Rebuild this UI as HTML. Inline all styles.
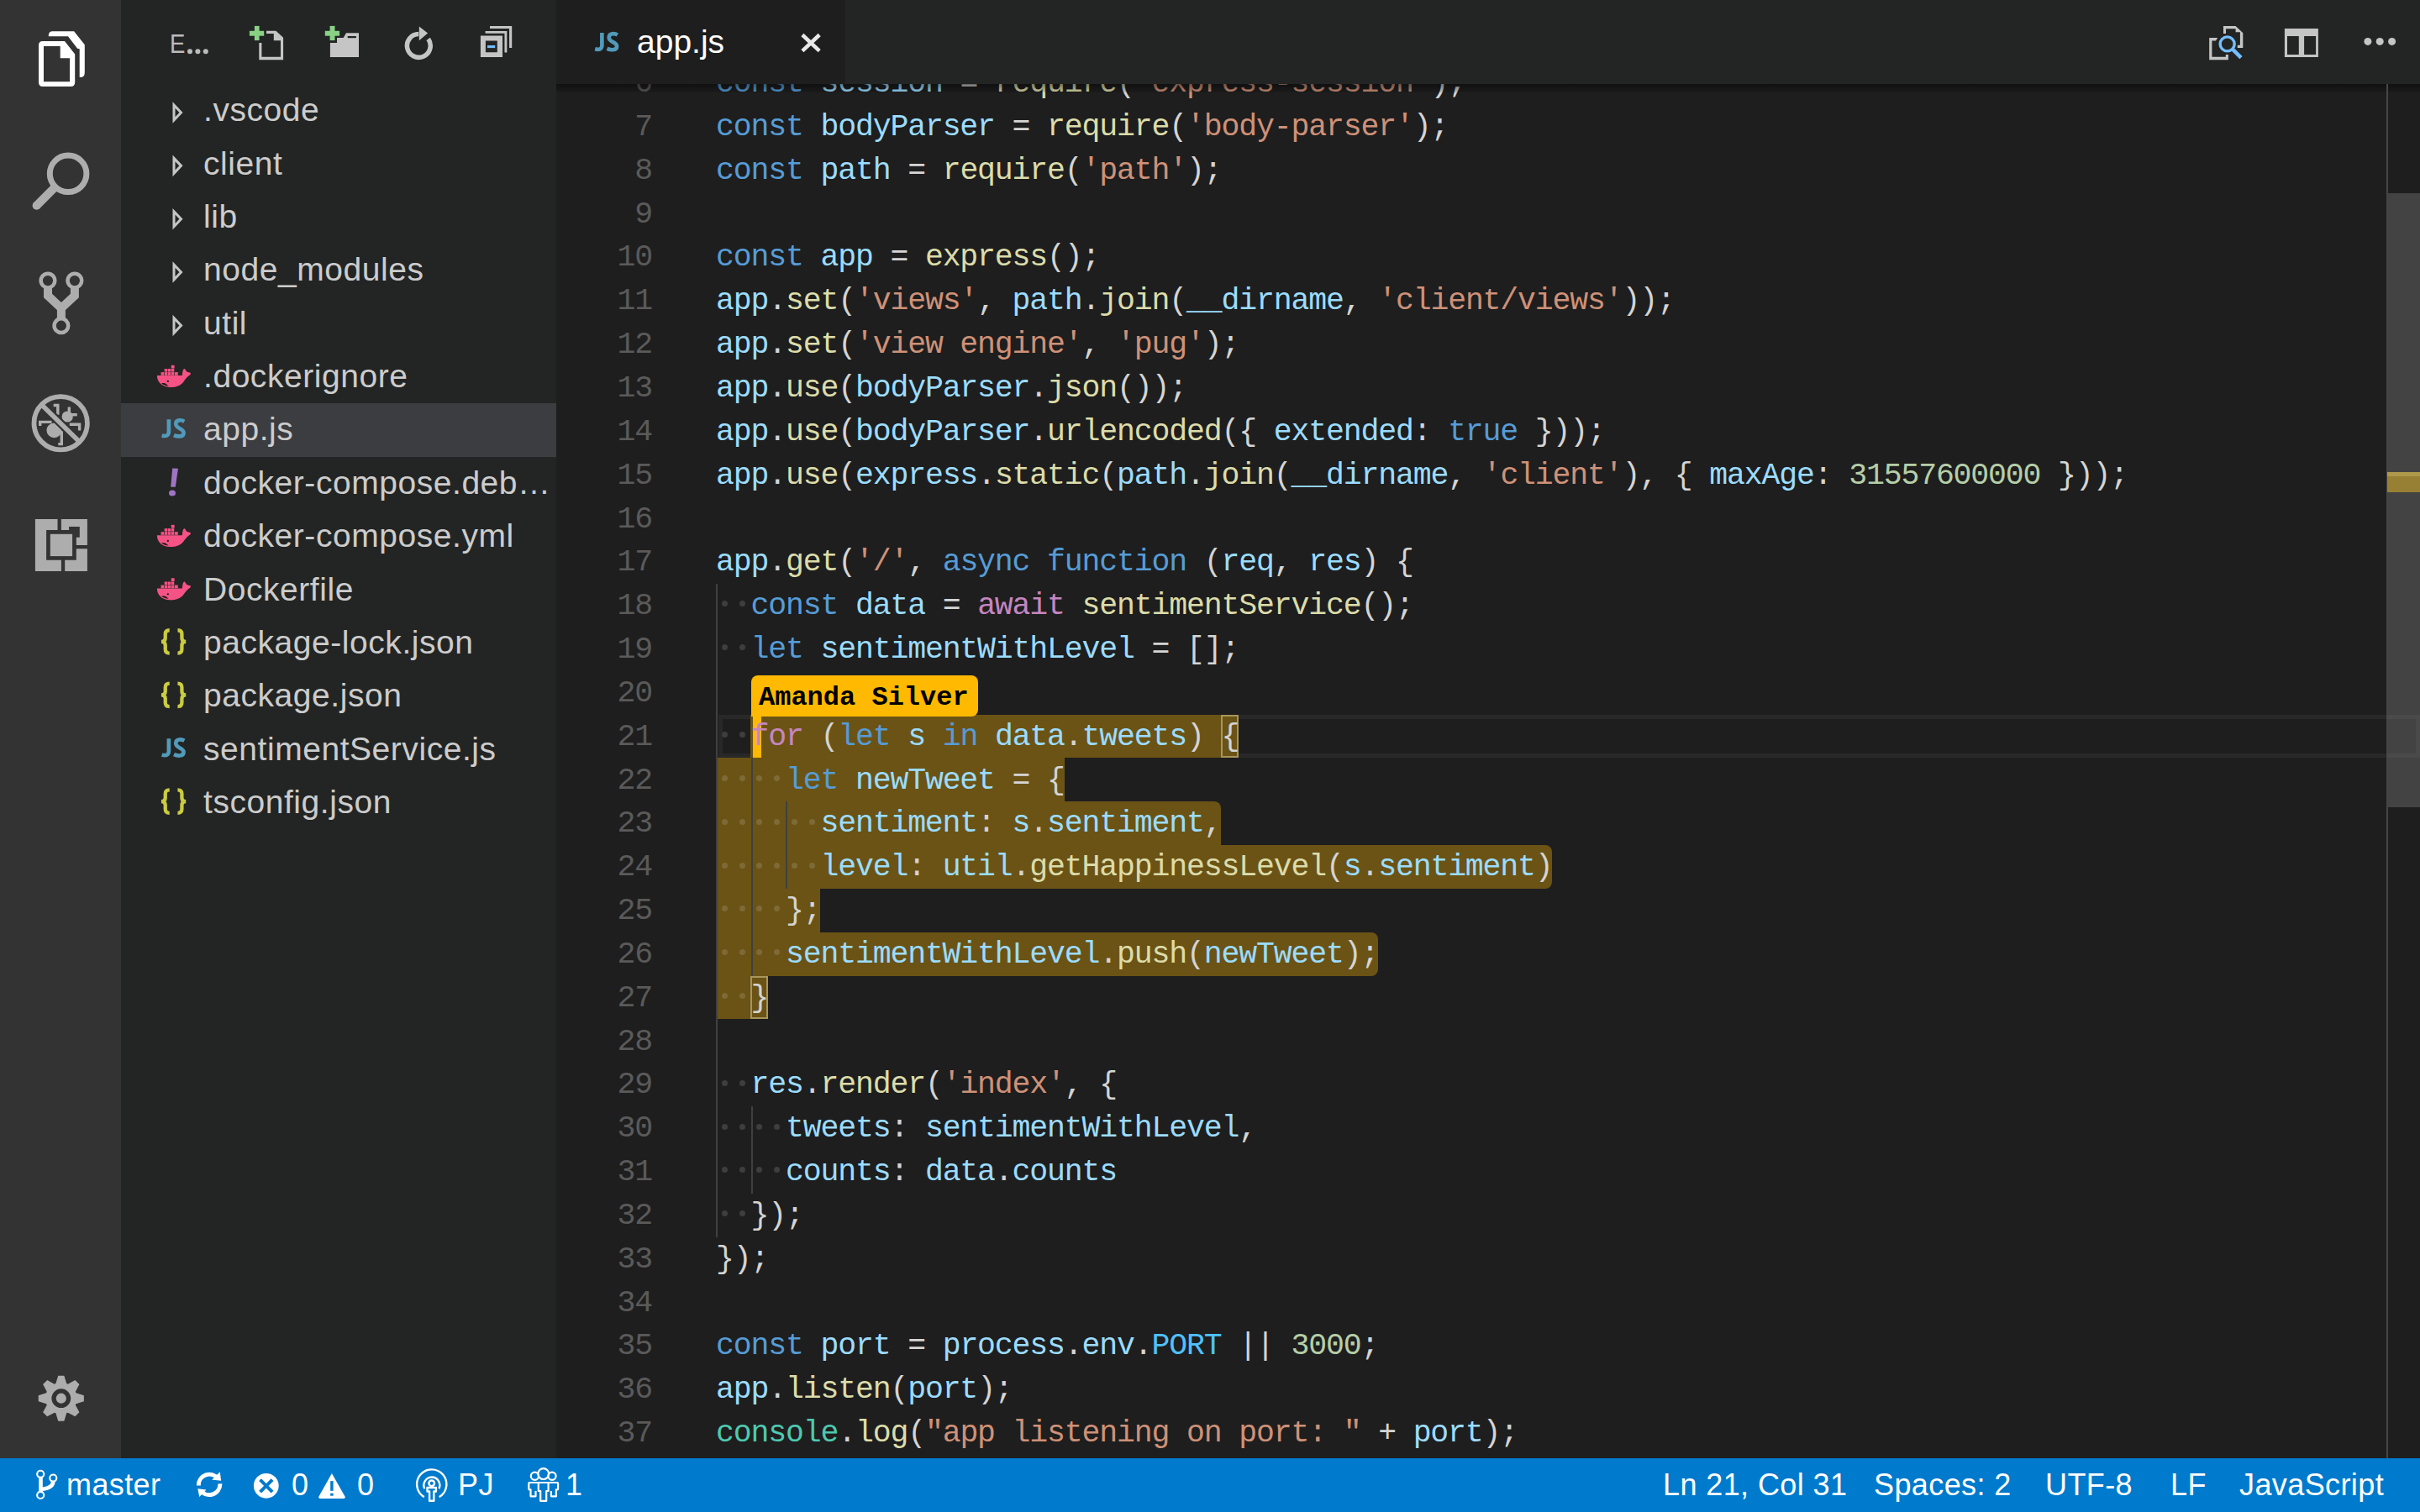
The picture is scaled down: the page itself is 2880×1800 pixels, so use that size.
<!DOCTYPE html>
<html><head><meta charset="utf-8"><title>app.js</title>
<style>
html,body{margin:0;padding:0;width:2880px;height:1800px;overflow:hidden;background:#1e1e1e;}
*{box-sizing:border-box;}
.abs{position:absolute;}
#act{position:absolute;left:0;top:0;width:144px;height:1736px;background:#333333;}
#side{position:absolute;left:144px;top:0;width:518px;height:1736px;background:#232524;}
#tabs{position:absolute;left:662px;top:0;width:2218px;height:100px;background:#232524;}
#tab{position:absolute;left:662px;top:0;width:344px;height:100px;background:#1e1e1e;}
#editor{position:absolute;left:662px;top:100px;width:2218px;height:1636px;background:#1e1e1e;overflow:hidden;}
#status{position:absolute;left:0;top:1736px;width:2880px;height:64px;background:#007acc;}
.st{position:absolute;top:0;height:64px;line-height:64px;font-family:"Liberation Sans",sans-serif;font-size:36px;letter-spacing:0.4px;color:#ffffff;white-space:pre;}
.row{position:absolute;left:144px;width:518px;height:63.36px;overflow:hidden;}
.fn{position:absolute;left:98px;font-family:"Liberation Sans",sans-serif;font-size:39px;letter-spacing:0.55px;color:#cccccc;white-space:pre;line-height:63.36px;top:-1.5px;}
.ln{position:absolute;width:150px;text-align:right;font-family:"Liberation Mono",monospace;font-size:36.5px;letter-spacing:-1.164px;color:#5a5a5a;white-space:pre;line-height:51.84px;}
.cl{position:absolute;left:852px;font-family:"Liberation Mono",monospace;font-size:36.5px;letter-spacing:-1.164px;white-space:pre;line-height:51.84px;}
</style></head><body>
<div id="act"></div>
<div id="side"></div>
<div id="tabs"></div>
<div id="tab"></div>
<div id="editor"></div>

<div class="row" style="top:100.80px;"><div class="fn">.vscode</div></div>
<div class="row" style="top:164.16px;"><div class="fn">client</div></div>
<div class="row" style="top:227.52px;"><div class="fn">lib</div></div>
<div class="row" style="top:290.88px;"><div class="fn">node_modules</div></div>
<div class="row" style="top:354.24px;"><div class="fn">util</div></div>
<div class="row" style="top:417.60px;"><div class="fn">.dockerignore</div></div>
<div class="abs" style="left:144px;top:480px;width:518px;height:64px;background:#3c3d40;"></div>
<div class="row" style="top:480.96px;"><div class="fn">app.js</div></div>
<div class="row" style="top:544.32px;"><div class="fn">docker-compose.deb…</div></div>
<div class="row" style="top:607.68px;"><div class="fn">docker-compose.yml</div></div>
<div class="row" style="top:671.04px;"><div class="fn">Dockerfile</div></div>
<div class="row" style="top:734.40px;"><div class="fn">package-lock.json</div></div>
<div class="row" style="top:797.76px;"><div class="fn">package.json</div></div>
<div class="row" style="top:861.12px;"><div class="fn">sentimentService.js</div></div>
<div class="row" style="top:924.48px;"><div class="fn">tsconfig.json</div></div>
<div style="position:absolute;left:0;top:100px;width:2880px;height:1636px;overflow:hidden;">
<div style="position:absolute;left:0;top:-100px;width:2880px;height:1800px;">
<div class="abs" style="left:855px;top:850.50px;width:1986px;height:51.84px;border:5px solid #282828;border-right:none;"></div>
<div class="abs" style="left:893.47px;top:850.50px;width:580.61px;height:51.84px;background:#6b5315;border-radius:0 8px 8px 0px;"></div>
<div class="abs" style="left:852.00px;top:902.34px;width:414.72px;height:51.84px;background:#6b5315;border-radius:0 0px 0px 0px;"></div>
<div class="abs" style="left:852.00px;top:954.18px;width:601.34px;height:51.84px;background:#6b5315;border-radius:0 8px 0px 0px;"></div>
<div class="abs" style="left:852.00px;top:1006.02px;width:995.33px;height:51.84px;background:#6b5315;border-radius:0 8px 8px 0px;"></div>
<div class="abs" style="left:852.00px;top:1057.86px;width:124.42px;height:51.84px;background:#6b5315;border-radius:0 0px 0px 0px;"></div>
<div class="abs" style="left:852.00px;top:1109.70px;width:787.97px;height:51.84px;background:#6b5315;border-radius:0 8px 8px 0px;"></div>
<div class="abs" style="left:852.00px;top:1161.54px;width:62.21px;height:51.84px;background:#6b5315;border-radius:0 0px 8px 0px;"></div>
<div class="abs" style="left:852.00px;top:694.98px;width:2px;height:777.60px;background:#404040;"></div>
<div class="abs" style="left:894.00px;top:902.34px;width:2px;height:259.20px;background:#404040;"></div>
<div class="abs" style="left:935.00px;top:954.18px;width:2px;height:103.68px;background:#404040;"></div>
<div class="abs" style="left:894.00px;top:1317.06px;width:2px;height:103.68px;background:#404040;"></div>
<div class="abs" style="left:858.87px;top:715.48px;width:7px;height:7px;border-radius:50%;background:#3e3e3e;"></div>
<div class="abs" style="left:879.60px;top:715.48px;width:7px;height:7px;border-radius:50%;background:#3e3e3e;"></div>
<div class="abs" style="left:858.87px;top:767.32px;width:7px;height:7px;border-radius:50%;background:#3e3e3e;"></div>
<div class="abs" style="left:879.60px;top:767.32px;width:7px;height:7px;border-radius:50%;background:#3e3e3e;"></div>
<div class="abs" style="left:858.87px;top:871.00px;width:7px;height:7px;border-radius:50%;background:#3e3e3e;"></div>
<div class="abs" style="left:879.60px;top:871.00px;width:7px;height:7px;border-radius:50%;background:#3e3e3e;"></div>
<div class="abs" style="left:858.87px;top:922.84px;width:7px;height:7px;border-radius:50%;background:#7e6a36;"></div>
<div class="abs" style="left:879.60px;top:922.84px;width:7px;height:7px;border-radius:50%;background:#7e6a36;"></div>
<div class="abs" style="left:900.34px;top:922.84px;width:7px;height:7px;border-radius:50%;background:#7e6a36;"></div>
<div class="abs" style="left:921.08px;top:922.84px;width:7px;height:7px;border-radius:50%;background:#7e6a36;"></div>
<div class="abs" style="left:858.87px;top:974.68px;width:7px;height:7px;border-radius:50%;background:#7e6a36;"></div>
<div class="abs" style="left:879.60px;top:974.68px;width:7px;height:7px;border-radius:50%;background:#7e6a36;"></div>
<div class="abs" style="left:900.34px;top:974.68px;width:7px;height:7px;border-radius:50%;background:#7e6a36;"></div>
<div class="abs" style="left:921.08px;top:974.68px;width:7px;height:7px;border-radius:50%;background:#7e6a36;"></div>
<div class="abs" style="left:941.81px;top:974.68px;width:7px;height:7px;border-radius:50%;background:#7e6a36;"></div>
<div class="abs" style="left:962.55px;top:974.68px;width:7px;height:7px;border-radius:50%;background:#7e6a36;"></div>
<div class="abs" style="left:858.87px;top:1026.52px;width:7px;height:7px;border-radius:50%;background:#7e6a36;"></div>
<div class="abs" style="left:879.60px;top:1026.52px;width:7px;height:7px;border-radius:50%;background:#7e6a36;"></div>
<div class="abs" style="left:900.34px;top:1026.52px;width:7px;height:7px;border-radius:50%;background:#7e6a36;"></div>
<div class="abs" style="left:921.08px;top:1026.52px;width:7px;height:7px;border-radius:50%;background:#7e6a36;"></div>
<div class="abs" style="left:941.81px;top:1026.52px;width:7px;height:7px;border-radius:50%;background:#7e6a36;"></div>
<div class="abs" style="left:962.55px;top:1026.52px;width:7px;height:7px;border-radius:50%;background:#7e6a36;"></div>
<div class="abs" style="left:858.87px;top:1078.36px;width:7px;height:7px;border-radius:50%;background:#7e6a36;"></div>
<div class="abs" style="left:879.60px;top:1078.36px;width:7px;height:7px;border-radius:50%;background:#7e6a36;"></div>
<div class="abs" style="left:900.34px;top:1078.36px;width:7px;height:7px;border-radius:50%;background:#7e6a36;"></div>
<div class="abs" style="left:921.08px;top:1078.36px;width:7px;height:7px;border-radius:50%;background:#7e6a36;"></div>
<div class="abs" style="left:858.87px;top:1130.20px;width:7px;height:7px;border-radius:50%;background:#7e6a36;"></div>
<div class="abs" style="left:879.60px;top:1130.20px;width:7px;height:7px;border-radius:50%;background:#7e6a36;"></div>
<div class="abs" style="left:900.34px;top:1130.20px;width:7px;height:7px;border-radius:50%;background:#7e6a36;"></div>
<div class="abs" style="left:921.08px;top:1130.20px;width:7px;height:7px;border-radius:50%;background:#7e6a36;"></div>
<div class="abs" style="left:858.87px;top:1182.04px;width:7px;height:7px;border-radius:50%;background:#7e6a36;"></div>
<div class="abs" style="left:879.60px;top:1182.04px;width:7px;height:7px;border-radius:50%;background:#7e6a36;"></div>
<div class="abs" style="left:858.87px;top:1285.72px;width:7px;height:7px;border-radius:50%;background:#3e3e3e;"></div>
<div class="abs" style="left:879.60px;top:1285.72px;width:7px;height:7px;border-radius:50%;background:#3e3e3e;"></div>
<div class="abs" style="left:858.87px;top:1337.56px;width:7px;height:7px;border-radius:50%;background:#3e3e3e;"></div>
<div class="abs" style="left:879.60px;top:1337.56px;width:7px;height:7px;border-radius:50%;background:#3e3e3e;"></div>
<div class="abs" style="left:900.34px;top:1337.56px;width:7px;height:7px;border-radius:50%;background:#3e3e3e;"></div>
<div class="abs" style="left:921.08px;top:1337.56px;width:7px;height:7px;border-radius:50%;background:#3e3e3e;"></div>
<div class="abs" style="left:858.87px;top:1389.40px;width:7px;height:7px;border-radius:50%;background:#3e3e3e;"></div>
<div class="abs" style="left:879.60px;top:1389.40px;width:7px;height:7px;border-radius:50%;background:#3e3e3e;"></div>
<div class="abs" style="left:900.34px;top:1389.40px;width:7px;height:7px;border-radius:50%;background:#3e3e3e;"></div>
<div class="abs" style="left:921.08px;top:1389.40px;width:7px;height:7px;border-radius:50%;background:#3e3e3e;"></div>
<div class="abs" style="left:858.87px;top:1441.24px;width:7px;height:7px;border-radius:50%;background:#3e3e3e;"></div>
<div class="abs" style="left:879.60px;top:1441.24px;width:7px;height:7px;border-radius:50%;background:#3e3e3e;"></div>
<div class="abs" style="left:1453.34px;top:850.50px;width:20.74px;height:51.84px;border:2px solid #a8955a;"></div>
<div class="abs" style="left:893.47px;top:1161.54px;width:20.74px;height:51.84px;border:2px solid #a8955a;"></div>
<div class="abs" style="left:896px;top:850.50px;width:10px;height:51.84px;background:#ffb900;"></div>
<div class="ln" style="left:626px;top:74.10px;">6</div>
<div class="cl" style="top:74.10px;"><span style="color:#569cd6">const</span><span style="color:#d4d4d4"> </span><span style="color:#9cdcfe">session</span><span style="color:#d4d4d4"> = </span><span style="color:#dcdcaa">require</span><span style="color:#d4d4d4">(</span><span style="color:#ce9178">&#x27;express-session&#x27;</span><span style="color:#d4d4d4">);</span></div>
<div class="ln" style="left:626px;top:125.94px;">7</div>
<div class="cl" style="top:125.94px;"><span style="color:#569cd6">const</span><span style="color:#d4d4d4"> </span><span style="color:#9cdcfe">bodyParser</span><span style="color:#d4d4d4"> = </span><span style="color:#dcdcaa">require</span><span style="color:#d4d4d4">(</span><span style="color:#ce9178">&#x27;body-parser&#x27;</span><span style="color:#d4d4d4">);</span></div>
<div class="ln" style="left:626px;top:177.78px;">8</div>
<div class="cl" style="top:177.78px;"><span style="color:#569cd6">const</span><span style="color:#d4d4d4"> </span><span style="color:#9cdcfe">path</span><span style="color:#d4d4d4"> = </span><span style="color:#dcdcaa">require</span><span style="color:#d4d4d4">(</span><span style="color:#ce9178">&#x27;path&#x27;</span><span style="color:#d4d4d4">);</span></div>
<div class="ln" style="left:626px;top:229.62px;">9</div>
<div class="ln" style="left:626px;top:281.46px;">10</div>
<div class="cl" style="top:281.46px;"><span style="color:#569cd6">const</span><span style="color:#d4d4d4"> </span><span style="color:#9cdcfe">app</span><span style="color:#d4d4d4"> = </span><span style="color:#dcdcaa">express</span><span style="color:#d4d4d4">();</span></div>
<div class="ln" style="left:626px;top:333.30px;">11</div>
<div class="cl" style="top:333.30px;"><span style="color:#9cdcfe">app</span><span style="color:#d4d4d4">.</span><span style="color:#dcdcaa">set</span><span style="color:#d4d4d4">(</span><span style="color:#ce9178">&#x27;views&#x27;</span><span style="color:#d4d4d4">, </span><span style="color:#9cdcfe">path</span><span style="color:#d4d4d4">.</span><span style="color:#dcdcaa">join</span><span style="color:#d4d4d4">(</span><span style="color:#9cdcfe">__dirname</span><span style="color:#d4d4d4">, </span><span style="color:#ce9178">&#x27;client/views&#x27;</span><span style="color:#d4d4d4">));</span></div>
<div class="ln" style="left:626px;top:385.14px;">12</div>
<div class="cl" style="top:385.14px;"><span style="color:#9cdcfe">app</span><span style="color:#d4d4d4">.</span><span style="color:#dcdcaa">set</span><span style="color:#d4d4d4">(</span><span style="color:#ce9178">&#x27;view engine&#x27;</span><span style="color:#d4d4d4">, </span><span style="color:#ce9178">&#x27;pug&#x27;</span><span style="color:#d4d4d4">);</span></div>
<div class="ln" style="left:626px;top:436.98px;">13</div>
<div class="cl" style="top:436.98px;"><span style="color:#9cdcfe">app</span><span style="color:#d4d4d4">.</span><span style="color:#dcdcaa">use</span><span style="color:#d4d4d4">(</span><span style="color:#9cdcfe">bodyParser</span><span style="color:#d4d4d4">.</span><span style="color:#dcdcaa">json</span><span style="color:#d4d4d4">());</span></div>
<div class="ln" style="left:626px;top:488.82px;">14</div>
<div class="cl" style="top:488.82px;"><span style="color:#9cdcfe">app</span><span style="color:#d4d4d4">.</span><span style="color:#dcdcaa">use</span><span style="color:#d4d4d4">(</span><span style="color:#9cdcfe">bodyParser</span><span style="color:#d4d4d4">.</span><span style="color:#dcdcaa">urlencoded</span><span style="color:#d4d4d4">({ </span><span style="color:#9cdcfe">extended</span><span style="color:#d4d4d4">: </span><span style="color:#569cd6">true</span><span style="color:#d4d4d4"> }));</span></div>
<div class="ln" style="left:626px;top:540.66px;">15</div>
<div class="cl" style="top:540.66px;"><span style="color:#9cdcfe">app</span><span style="color:#d4d4d4">.</span><span style="color:#dcdcaa">use</span><span style="color:#d4d4d4">(</span><span style="color:#9cdcfe">express</span><span style="color:#d4d4d4">.</span><span style="color:#dcdcaa">static</span><span style="color:#d4d4d4">(</span><span style="color:#9cdcfe">path</span><span style="color:#d4d4d4">.</span><span style="color:#dcdcaa">join</span><span style="color:#d4d4d4">(</span><span style="color:#9cdcfe">__dirname</span><span style="color:#d4d4d4">, </span><span style="color:#ce9178">&#x27;client&#x27;</span><span style="color:#d4d4d4">), { </span><span style="color:#9cdcfe">maxAge</span><span style="color:#d4d4d4">: </span><span style="color:#b5cea8">31557600000</span><span style="color:#d4d4d4"> }));</span></div>
<div class="ln" style="left:626px;top:592.50px;">16</div>
<div class="ln" style="left:626px;top:644.34px;">17</div>
<div class="cl" style="top:644.34px;"><span style="color:#9cdcfe">app</span><span style="color:#d4d4d4">.</span><span style="color:#dcdcaa">get</span><span style="color:#d4d4d4">(</span><span style="color:#ce9178">&#x27;/&#x27;</span><span style="color:#d4d4d4">, </span><span style="color:#569cd6">async</span><span style="color:#d4d4d4"> </span><span style="color:#569cd6">function</span><span style="color:#d4d4d4"> (</span><span style="color:#9cdcfe">req</span><span style="color:#d4d4d4">, </span><span style="color:#9cdcfe">res</span><span style="color:#d4d4d4">) {</span></div>
<div class="ln" style="left:626px;top:696.18px;">18</div>
<div class="cl" style="top:696.18px;"><span style="color:#d4d4d4">  </span><span style="color:#569cd6">const</span><span style="color:#d4d4d4"> </span><span style="color:#9cdcfe">data</span><span style="color:#d4d4d4"> = </span><span style="color:#c586c0">await</span><span style="color:#d4d4d4"> </span><span style="color:#dcdcaa">sentimentService</span><span style="color:#d4d4d4">();</span></div>
<div class="ln" style="left:626px;top:748.02px;">19</div>
<div class="cl" style="top:748.02px;"><span style="color:#d4d4d4">  </span><span style="color:#569cd6">let</span><span style="color:#d4d4d4"> </span><span style="color:#9cdcfe">sentimentWithLevel</span><span style="color:#d4d4d4"> = [];</span></div>
<div class="ln" style="left:626px;top:799.86px;">20</div>
<div class="ln" style="left:626px;top:851.70px;">21</div>
<div class="cl" style="top:851.70px;"><span style="color:#d4d4d4">  </span><span style="color:#c586c0">for</span><span style="color:#d4d4d4"> (</span><span style="color:#569cd6">let</span><span style="color:#d4d4d4"> </span><span style="color:#9cdcfe">s</span><span style="color:#d4d4d4"> </span><span style="color:#569cd6">in</span><span style="color:#d4d4d4"> </span><span style="color:#9cdcfe">data</span><span style="color:#d4d4d4">.</span><span style="color:#9cdcfe">tweets</span><span style="color:#d4d4d4">) {</span></div>
<div class="ln" style="left:626px;top:903.54px;">22</div>
<div class="cl" style="top:903.54px;"><span style="color:#d4d4d4">    </span><span style="color:#569cd6">let</span><span style="color:#d4d4d4"> </span><span style="color:#9cdcfe">newTweet</span><span style="color:#d4d4d4"> = {</span></div>
<div class="ln" style="left:626px;top:955.38px;">23</div>
<div class="cl" style="top:955.38px;"><span style="color:#d4d4d4">      </span><span style="color:#9cdcfe">sentiment</span><span style="color:#d4d4d4">: </span><span style="color:#9cdcfe">s</span><span style="color:#d4d4d4">.</span><span style="color:#9cdcfe">sentiment</span><span style="color:#d4d4d4">,</span></div>
<div class="ln" style="left:626px;top:1007.22px;">24</div>
<div class="cl" style="top:1007.22px;"><span style="color:#d4d4d4">      </span><span style="color:#9cdcfe">level</span><span style="color:#d4d4d4">: </span><span style="color:#9cdcfe">util</span><span style="color:#d4d4d4">.</span><span style="color:#dcdcaa">getHappinessLevel</span><span style="color:#d4d4d4">(</span><span style="color:#9cdcfe">s</span><span style="color:#d4d4d4">.</span><span style="color:#9cdcfe">sentiment</span><span style="color:#d4d4d4">)</span></div>
<div class="ln" style="left:626px;top:1059.06px;">25</div>
<div class="cl" style="top:1059.06px;"><span style="color:#d4d4d4">    };</span></div>
<div class="ln" style="left:626px;top:1110.90px;">26</div>
<div class="cl" style="top:1110.90px;"><span style="color:#d4d4d4">    </span><span style="color:#9cdcfe">sentimentWithLevel</span><span style="color:#d4d4d4">.</span><span style="color:#dcdcaa">push</span><span style="color:#d4d4d4">(</span><span style="color:#9cdcfe">newTweet</span><span style="color:#d4d4d4">);</span></div>
<div class="ln" style="left:626px;top:1162.74px;">27</div>
<div class="cl" style="top:1162.74px;"><span style="color:#d4d4d4">  }</span></div>
<div class="ln" style="left:626px;top:1214.58px;">28</div>
<div class="ln" style="left:626px;top:1266.42px;">29</div>
<div class="cl" style="top:1266.42px;"><span style="color:#d4d4d4">  </span><span style="color:#9cdcfe">res</span><span style="color:#d4d4d4">.</span><span style="color:#dcdcaa">render</span><span style="color:#d4d4d4">(</span><span style="color:#ce9178">&#x27;index&#x27;</span><span style="color:#d4d4d4">, {</span></div>
<div class="ln" style="left:626px;top:1318.26px;">30</div>
<div class="cl" style="top:1318.26px;"><span style="color:#d4d4d4">    </span><span style="color:#9cdcfe">tweets</span><span style="color:#d4d4d4">: </span><span style="color:#9cdcfe">sentimentWithLevel</span><span style="color:#d4d4d4">,</span></div>
<div class="ln" style="left:626px;top:1370.10px;">31</div>
<div class="cl" style="top:1370.10px;"><span style="color:#d4d4d4">    </span><span style="color:#9cdcfe">counts</span><span style="color:#d4d4d4">: </span><span style="color:#9cdcfe">data</span><span style="color:#d4d4d4">.</span><span style="color:#9cdcfe">counts</span></div>
<div class="ln" style="left:626px;top:1421.94px;">32</div>
<div class="cl" style="top:1421.94px;"><span style="color:#d4d4d4">  });</span></div>
<div class="ln" style="left:626px;top:1473.78px;">33</div>
<div class="cl" style="top:1473.78px;"><span style="color:#d4d4d4">});</span></div>
<div class="ln" style="left:626px;top:1525.62px;">34</div>
<div class="ln" style="left:626px;top:1577.46px;">35</div>
<div class="cl" style="top:1577.46px;"><span style="color:#569cd6">const</span><span style="color:#d4d4d4"> </span><span style="color:#9cdcfe">port</span><span style="color:#d4d4d4"> = </span><span style="color:#9cdcfe">process</span><span style="color:#d4d4d4">.</span><span style="color:#9cdcfe">env</span><span style="color:#d4d4d4">.</span><span style="color:#4fc1ff">PORT</span><span style="color:#d4d4d4"> || </span><span style="color:#b5cea8">3000</span><span style="color:#d4d4d4">;</span></div>
<div class="ln" style="left:626px;top:1629.30px;">36</div>
<div class="cl" style="top:1629.30px;"><span style="color:#9cdcfe">app</span><span style="color:#d4d4d4">.</span><span style="color:#dcdcaa">listen</span><span style="color:#d4d4d4">(</span><span style="color:#9cdcfe">port</span><span style="color:#d4d4d4">);</span></div>
<div class="ln" style="left:626px;top:1681.14px;">37</div>
<div class="cl" style="top:1681.14px;"><span style="color:#4ec9b0">console</span><span style="color:#d4d4d4">.</span><span style="color:#dcdcaa">log</span><span style="color:#d4d4d4">(</span><span style="color:#ce9178">&quot;app listening on port: &quot;</span><span style="color:#d4d4d4"> + </span><span style="color:#9cdcfe">port</span><span style="color:#d4d4d4">);</span></div>
<div class="ln" style="left:626px;top:1732.98px;">38</div>
<div class="abs" style="left:894px;top:804px;width:270px;height:49px;background:#ffb900;border-radius:8px 8px 8px 0;"></div>
<div class="abs" style="left:903px;top:807px;height:47px;line-height:47px;font-family:'Liberation Mono',monospace;font-weight:bold;font-size:32px;color:#000;white-space:pre;">Amanda Silver</div>
</div></div>
<div class="abs" style="left:662px;top:100px;width:2218px;height:10px;background:linear-gradient(rgba(0,0,0,0.45),rgba(0,0,0,0.1));"></div>
<div class="abs" style="left:2840px;top:100px;width:1.5px;height:1636px;background:#474747;"></div>
<div class="abs" style="left:2841px;top:230px;width:39px;height:731px;background:#434343;"></div>
<div class="abs" style="left:2841px;top:562px;width:39px;height:24px;background:#977f33;border-top:5px solid #ae9849;"></div>
<div class="abs" style="left:2841px;top:850.50px;width:39px;height:51.84px;border:5px solid rgba(255,255,255,0.04);border-left:none;"></div>
<div class="abs" style="left:758px;top:0;height:100px;line-height:100px;font-family:'Liberation Sans',sans-serif;font-size:39px;color:#ffffff;white-space:pre;">app.js</div>
<div class="abs" style="left:202px;top:0;height:100px;line-height:104px;font-family:'Liberation Sans',sans-serif;font-size:32px;color:#bbbbbb;white-space:pre;transform:scaleX(0.86);transform-origin:0 0;">E</div>
<svg class="abs" style="left:0;top:0" width="260" height="100"><g fill="#bbbbbb"><circle cx="226" cy="61.3" r="3"/><circle cx="235.4" cy="61.3" r="3"/><circle cx="244.8" cy="61.3" r="3"/></g></svg>
<div id="status"></div>
<div class="st" style="left:79px;top:1736px;">master</div>
<div class="st" style="left:347px;top:1736px;">0</div>
<div class="st" style="left:425px;top:1736px;">0</div>
<div class="st" style="left:545px;top:1736px;">PJ</div>
<div class="st" style="left:673px;top:1736px;">1</div>
<div class="st" style="left:1979px;top:1736px;">Ln 21, Col 31</div>
<div class="st" style="left:2230px;top:1736px;">Spaces: 2</div>
<div class="st" style="left:2434px;top:1736px;">UTF-8</div>
<div class="st" style="left:2583px;top:1736px;">LF</div>
<div class="st" style="left:2665px;top:1736px;">JavaScript</div>
<svg class="abs" style="left:0;top:0;" width="2880" height="1800" viewBox="0 0 2880 1800">
<g fill="#ffffff" fill-rule="evenodd">
<path d="M46 54 Q46 49 51 49 L77 49 L89.2 64.4 L89.2 98 Q89.2 103 84.2 103 L51 103 Q46 103 46 98 Z M52 55 L71.7 55 L71.7 69.2 L83.1 69.2 L83.1 97.3 L52 97.3 Z"/>
<path d="M62 37.2 L88.1 37.2 L100.8 53.3 L100.8 86.5 Q100.8 92 95.5 92 L94.7 92 L94.7 58.3 L92.1 57.8 L81 43.2 L57.7 43.2 Q57.7 37.2 62 37.2 Z"/>
</g>
<g fill="none" stroke="#adadad">
<circle cx="81.1" cy="206.8" r="21.8" stroke-width="7"/>
<circle cx="43.6" cy="244.8" r="5" fill="#adadad" stroke="none"/>
<line x1="67" y1="221.3" x2="43.6" y2="244.8" stroke-width="10" stroke-linecap="butt"/>
</g>
<g fill="none" stroke="#adadad">
<circle cx="57" cy="334.1" r="8.35" stroke-width="4.5"/>
<circle cx="88.9" cy="334.1" r="8.35" stroke-width="4.5"/>
<circle cx="72.9" cy="387.7" r="8.35" stroke-width="4.5"/>
<path d="M57 342 L57 352 L72.9 367 L88.9 352 L88.9 342 M72.9 367 L72.9 380" stroke-width="10"/>
</g>
<g fill="#adadad">
<circle cx="64.4" cy="512.3" r="8.9"/>
<circle cx="80.2" cy="496" r="6.6"/>
</g>
<g fill="none" stroke="#adadad" stroke-width="3.4">
<path d="M47.7 507 L47.7 502.4 L61.5 502.4"/>
<path d="M73.3 512.8 L73.3 528.6 L69.3 528.6"/>
<path d="M68.8 493.7 L68.8 482.5 L63.7 482.5"/>
<path d="M82.3 490.6 L82.3 484.5"/>
<path d="M82 493.7 L91.8 493.7"/>
<path d="M82.8 505.3 L94.6 505.3 L94.6 512.6"/>
</g>
<line x1="48" y1="480.3" x2="95.6" y2="527.1" stroke="#333333" stroke-width="10"/>
<circle cx="72.2" cy="503.7" r="31.7" fill="none" stroke="#adadad" stroke-width="5.75"/>
<line x1="50" y1="482.3" x2="93.6" y2="525.1" stroke="#adadad" stroke-width="5.6"/>
<g fill="#adadad">
<path d="M41.9 617.9 L68.5 617.9 L68.5 631.1 L55.1 631.1 L55.1 666.8 L72.9 666.8 L72.9 679.9 L41.9 679.9 Z"/>
<path d="M72.9 617.9 L103.9 617.9 L103.9 648.9 L90.8 648.9 L90.8 639.8 L94.8 639.8 L94.8 627.1 L82.1 627.1 L82.1 631.1 L72.9 631.1 Z"/>
<path d="M90.8 653.2 L103.9 653.2 L103.9 679.9 L77.2 679.9 L77.2 666.8 L90.8 666.8 Z"/>
<rect x="59.8" y="635.8" width="26.3" height="26.3"/>
</g>
<path fill="#adadad" fill-rule="evenodd" d="M66.37 1647.03 L69.24 1637.63 L76.36 1637.63 L79.23 1647.03 L80.75 1647.66 L89.42 1643.04 L94.46 1648.08 L89.84 1656.75 L90.47 1658.27 L99.87 1661.14 L99.87 1668.26 L90.47 1671.13 L89.84 1672.65 L94.46 1681.32 L89.42 1686.36 L80.75 1681.74 L79.23 1682.37 L76.36 1691.77 L69.24 1691.77 L66.37 1682.37 L64.85 1681.74 L56.18 1686.36 L51.14 1681.32 L55.76 1672.65 L55.13 1671.13 L45.73 1668.26 L45.73 1661.14 L55.13 1658.27 L55.76 1656.75 L51.14 1648.08 L56.18 1643.04 L64.85 1647.66 Z M84.20 1664.70 A11.4 11.4 0 1 0 61.40 1664.70 A11.4 11.4 0 1 0 84.20 1664.70 Z"/><circle cx="72.8" cy="1664.7" r="6.1" fill="#adadad"/>
<g fill="#89d185">
<rect x="302.9" y="30.9" width="5.7" height="17.2"/><rect x="296.9" y="36.8" width="17.3" height="5.9"/>
<rect x="392.6" y="30.9" width="5.9" height="17.2"/><rect x="386.8" y="36.8" width="17.3" height="5.9"/>
</g>
<g fill="#c5c5c5">
<path d="M317 36.8 L328.4 36.8 L337.1 44.8 L337.1 71.2 L308.3 71.2 L308.3 51 L311.4 51 L311.4 67.8 L334 67.8 L334 48.2 L325.8 48.2 L325.8 39.9 L317 39.9 Z"/>
<path d="M392.9 68.1 L392.9 51 L401 51 L401 45.1 L408.7 45.1 L412 39.3 L427 39.3 L427 68.1 Z"/>
</g>
<rect x="413.7" y="43" width="10.2" height="2.2" fill="#232524"/>
<path d="M498.3 40.5 A13.9 13.9 0 1 0 509.7 46.4" fill="none" stroke="#c5c5c5" stroke-width="5.5"/>
<path d="M498.8 31.5 L509.1 39.6 L498.8 48.2 Z" fill="#c5c5c5"/>
<g fill="#c5c5c5" fill-rule="evenodd">
<path d="M571.9 42.4 L598 42.4 L598 68.1 L571.9 68.1 Z M577.9 48.4 L577.9 62.2 L591.8 62.2 L591.8 48.4 Z"/>
<path d="M577.6 36.9 L603.3 36.9 L603.3 62.5 L600.5 62.5 L600.5 39.8 L577.6 39.8 Z"/>
<path d="M583 31 L609.2 31 L609.2 57.1 L606.1 57.1 L606.1 34 L583 34 Z"/>
</g>
<rect x="580" y="54" width="9.2" height="3.1" fill="#75beff"/>
<path d="M954.9 41.5 L975.2 60.7 M975.2 41.5 L954.9 60.7" stroke="#e8e8e8" stroke-width="4.5"/>
<g fill="#c5c5c5">
<path d="M2646 31 L2660.6 31 L2669.3 39.3 L2669.3 56.9 L2662.8 56.9 L2662.8 53.8 L2665.9 53.8 L2665.9 38.3 L2660.6 38.3 L2660.6 34.3 L2649 34.3 L2649 39.9 L2646 39.9 Z"/>
<path d="M2629.2 45.1 L2639.2 45.1 L2637 48.6 L2632.4 48.6 L2632.4 67.8 L2648.8 67.8 L2648.8 65 L2651.9 65 L2651.9 71.2 L2629.2 71.2 Z"/>
<path fill-rule="evenodd" d="M2718.9 34 L2758.9 34 L2758.9 68.1 L2718.9 68.1 Z M2722 43 L2722 65 L2735.8 65 L2735.8 43 Z M2742.1 43 L2742.1 65 L2756.1 65 L2756.1 43 Z"/>
<circle cx="2817.9" cy="49.4" r="4.5"/><circle cx="2832.2" cy="49.4" r="4.5"/><circle cx="2846.6" cy="49.4" r="4.5"/>
</g>
<circle cx="2650.65" cy="52.4" r="8.5" fill="none" stroke="#75beff" stroke-width="3.4"/>
<line x1="2656.7" y1="58.4" x2="2667" y2="68.7" stroke="#75beff" stroke-width="4.5"/>
<path d="M207 125.00 L215.5 134.00 L207 143.00 Z" fill="none" stroke="#c5c5c5" stroke-width="3" stroke-linejoin="miter"/>
<path d="M207 188.36 L215.5 197.36 L207 206.36 Z" fill="none" stroke="#c5c5c5" stroke-width="3" stroke-linejoin="miter"/>
<path d="M207 251.72 L215.5 260.72 L207 269.72 Z" fill="none" stroke="#c5c5c5" stroke-width="3" stroke-linejoin="miter"/>
<path d="M207 315.08 L215.5 324.08 L207 333.08 Z" fill="none" stroke="#c5c5c5" stroke-width="3" stroke-linejoin="miter"/>
<path d="M207 378.44 L215.5 387.44 L207 396.44 Z" fill="none" stroke="#c5c5c5" stroke-width="3" stroke-linejoin="miter"/>
<g transform="translate(182 428.00) scale(0.025138)" fill="#f55385">
<rect x="380" y="600" width="140" height="145"/><rect x="545" y="600" width="140" height="145"/><rect x="705" y="600" width="140" height="145"/><rect x="865" y="600" width="140" height="145"/><rect x="1030" y="600" width="155" height="145"/>
<rect x="545" y="440" width="140" height="140"/><rect x="705" y="440" width="140" height="140"/><rect x="865" y="440" width="140" height="140"/>
<rect x="865" y="270" width="155" height="150"/>
<path d="M195 760 L1380 760 C1400 700 1390 560 1440 480 C1460 440 1500 430 1520 460 L1600 580 L1790 640 L1770 720 C1650 800 1550 900 1450 1050 C1300 1250 1050 1320 800 1310 C400 1300 195 1050 195 760 Z"/>
<circle cx="710" cy="1030" r="45" fill="#1a1a1a"/>
<path d="M400 1130 C500 1110 580 1110 620 1150 L740 1250 C600 1240 500 1200 400 1130 Z" fill="#1a1a1a"/>
</g>
<g transform="translate(182 618.08) scale(0.025138)" fill="#f55385">
<rect x="380" y="600" width="140" height="145"/><rect x="545" y="600" width="140" height="145"/><rect x="705" y="600" width="140" height="145"/><rect x="865" y="600" width="140" height="145"/><rect x="1030" y="600" width="155" height="145"/>
<rect x="545" y="440" width="140" height="140"/><rect x="705" y="440" width="140" height="140"/><rect x="865" y="440" width="140" height="140"/>
<rect x="865" y="270" width="155" height="150"/>
<path d="M195 760 L1380 760 C1400 700 1390 560 1440 480 C1460 440 1500 430 1520 460 L1600 580 L1790 640 L1770 720 C1650 800 1550 900 1450 1050 C1300 1250 1050 1320 800 1310 C400 1300 195 1050 195 760 Z"/>
<circle cx="710" cy="1030" r="45" fill="#1a1a1a"/>
<path d="M400 1130 C500 1110 580 1110 620 1150 L740 1250 C600 1240 500 1200 400 1130 Z" fill="#1a1a1a"/>
</g>
<g transform="translate(182 681.44) scale(0.025138)" fill="#f55385">
<rect x="380" y="600" width="140" height="145"/><rect x="545" y="600" width="140" height="145"/><rect x="705" y="600" width="140" height="145"/><rect x="865" y="600" width="140" height="145"/><rect x="1030" y="600" width="155" height="145"/>
<rect x="545" y="440" width="140" height="140"/><rect x="705" y="440" width="140" height="140"/><rect x="865" y="440" width="140" height="140"/>
<rect x="865" y="270" width="155" height="150"/>
<path d="M195 760 L1380 760 C1400 700 1390 560 1440 480 C1460 440 1500 430 1520 460 L1600 580 L1790 640 L1770 720 C1650 800 1550 900 1450 1050 C1300 1250 1050 1320 800 1310 C400 1300 195 1050 195 760 Z"/>
<circle cx="710" cy="1030" r="45" fill="#1a1a1a"/>
<path d="M400 1130 C500 1110 580 1110 620 1150 L740 1250 C600 1240 500 1200 400 1130 Z" fill="#1a1a1a"/>
</g>
<g transform="translate(185.00 490.00) scale(0.026455)" fill="none" stroke="#519aba" stroke-width="175">
<path d="M600 345 L600 900 C600 1080 480 1130 290 1075"/>
<path d="M1300 440 C1180 370 915 340 915 560 C915 770 1270 760 1270 950 C1270 1170 960 1120 830 1060"/>
</g>
<g transform="translate(185.00 870.16) scale(0.026455)" fill="none" stroke="#519aba" stroke-width="175">
<path d="M600 345 L600 900 C600 1080 480 1130 290 1075"/>
<path d="M1300 440 C1180 370 915 340 915 560 C915 770 1270 760 1270 950 C1270 1170 960 1120 830 1060"/>
</g>
<g transform="translate(700.50 29.90) scale(0.026455)" fill="none" stroke="#519aba" stroke-width="175">
<path d="M600 345 L600 900 C600 1080 480 1130 290 1075"/>
<path d="M1300 440 C1180 370 915 340 915 560 C915 770 1270 760 1270 950 C1270 1170 960 1120 830 1060"/>
</g>
<path d="M205.2 557.4 L211.95 557.8 L208.8 579.8 L203.2 579.8 Z" fill="#a074c4"/><ellipse cx="205" cy="587" rx="4" ry="3.5" fill="#a074c4"/>
<g transform="translate(185 740.00) scale(0.033069)" fill="none" stroke="#cbcb41" stroke-width="130">
<path d="M505 310 C390 310 355 360 355 450 L355 600 C355 680 310 718 215 725 C310 732 355 770 355 850 L355 1000 C355 1090 390 1140 505 1140"/>
<path d="M800 310 C915 310 950 360 950 450 L950 600 C950 680 995 718 1090 725 C995 732 950 770 950 850 L950 1000 C950 1090 915 1140 800 1140"/>
</g>
<g transform="translate(185 803.36) scale(0.033069)" fill="none" stroke="#cbcb41" stroke-width="130">
<path d="M505 310 C390 310 355 360 355 450 L355 600 C355 680 310 718 215 725 C310 732 355 770 355 850 L355 1000 C355 1090 390 1140 505 1140"/>
<path d="M800 310 C915 310 950 360 950 450 L950 600 C950 680 995 718 1090 725 C995 732 950 770 950 850 L950 1000 C950 1090 915 1140 800 1140"/>
</g>
<g transform="translate(185 930.08) scale(0.033069)" fill="none" stroke="#cbcb41" stroke-width="130">
<path d="M505 310 C390 310 355 360 355 450 L355 600 C355 680 310 718 215 725 C310 732 355 770 355 850 L355 1000 C355 1090 390 1140 505 1140"/>
<path d="M800 310 C915 310 950 360 950 450 L950 600 C950 680 995 718 1090 725 C995 732 950 770 950 850 L950 1000 C950 1090 915 1140 800 1140"/>
</g>
<g fill="none" stroke="#ffffff">
<circle cx="48.2" cy="1754.8" r="4.05" stroke-width="2.1"/>
<circle cx="63.3" cy="1759.6" r="4.05" stroke-width="2.1"/>
<circle cx="48.2" cy="1779.9" r="4.05" stroke-width="2.1"/>
<path d="M48.5 1758.6 L48.5 1775.8" stroke-width="4.6"/>
<path d="M63.3 1763 C63.3 1769 59 1771.5 50 1773" stroke-width="4.7"/>
</g>
<g fill="none" stroke="#ffffff" stroke-width="5">
<path d="M236.35 1768.5 A12.8 12.8 0 0 1 259.5 1760.5"/>
<path d="M261.85 1766.3 A12.8 12.8 0 0 1 238.7 1774.3"/>
</g>
<g fill="#ffffff">
<path d="M261.8 1752.3 L263.1 1762.7 L252.2 1761.7 Z"/>
<path d="M235.3 1772.2 L237.3 1782.1 L245.5 1773.4 Z"/>
<circle cx="316.8" cy="1768.8" r="14.9"/>
<path d="M394.9 1753.9 L410.8 1782 Q411 1784 409 1784 L381 1784 Q379 1784 379.2 1782 Z"/>
</g>
<path d="M309.6 1761.6 L324.1 1776.1 M324.1 1761.6 L309.6 1776.1" stroke="#007acc" stroke-width="4"/>
<rect x="393.2" y="1763.1" width="3.4" height="11.7" fill="#007acc"/>
<rect x="393.2" y="1777.7" width="3.4" height="3" fill="#007acc"/>
<g fill="none" stroke="#ffffff" stroke-width="2.4">
<path d="M504.8 1782.1 A17.6 17.6 0 1 1 522.7 1782.1"/>
<path d="M505.3 1772.2 A9.5 9.5 0 1 1 522.4 1772.2"/>
<circle cx="513.7" cy="1765.8" r="3.3"/>
<path d="M508.5 1771 L518.9 1771 L518.9 1775.5 L516.3 1775.5 L516.3 1786.8 L511.1 1786.8 L511.1 1775.5 L508.5 1775.5 Z" stroke-linejoin="round"/>
</g>
<g fill="none" stroke="#ffffff" stroke-width="2.2" stroke-linejoin="round">
<circle cx="646.7" cy="1754.6" r="6.4"/>
<circle cx="636.4" cy="1757.3" r="4.6"/>
<circle cx="657" cy="1757.3" r="4.6"/>
<path d="M640.8 1765 L652.6 1765 L652.6 1775 L650.2 1775 L650.2 1786.8 L643.2 1786.8 L643.2 1775 L640.8 1775 Z"/>
<path d="M640.8 1765 L630 1765 Q629.3 1765 629.3 1766 L629.3 1772.5 Q629.3 1773.3 630 1773.3 L631.5 1773.3 L631.5 1781.3 L637.5 1781.3 L637.5 1775"/>
<path d="M652.6 1765 L663.4 1765 Q664.1 1765 664.1 1766 L664.1 1772.5 Q664.1 1773.3 663.4 1773.3 L661.9 1773.3 L661.9 1781.3 L655.9 1781.3 L655.9 1775"/>
</g>
</svg>
</body></html>
